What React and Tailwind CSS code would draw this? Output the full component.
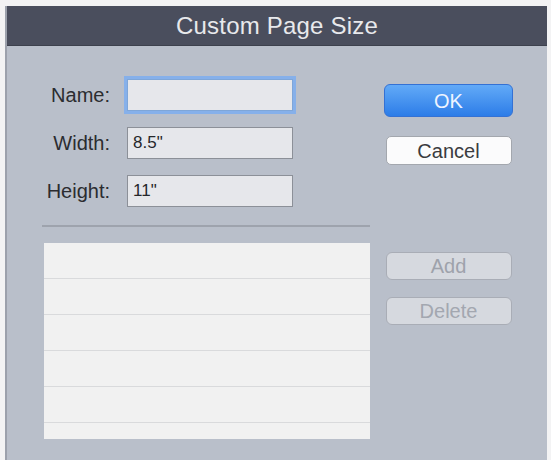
export default function App() {
  const font = { fontFamily: '"Liberation Sans", Arial, sans-serif' };
  const rows = [0, 1, 2, 3, 4, 5];
  return (
    <div className="w-[551px] h-[460px] bg-[#f3f3f4] pt-[6px] pl-[5px] pr-[4px] flex overflow-hidden" style={font}>
      <div className="flex-1 flex flex-col border-l-2 border-[#9ca1ac]">
        <div className="h-[40px] shrink-0 bg-[#4a4e5d] flex items-center justify-center border-b border-[#3d414d]">
          <span className="text-[24px] leading-none text-[#e8e9ec] tracking-[0.2px]">Custom Page Size</span>
        </div>
        <div className="flex-1 bg-[#b9bfca] flex">
          <div className="ml-[37px] w-[326px] pt-[33px] flex flex-col">
            <div className="flex flex-col gap-[16px]">
              <div className="flex items-center h-[32px]">
                <div className="w-[66px] text-right text-[20px] text-[#2b2c30]">Name:</div>
                <div className="ml-[17px] w-[166px] h-[32px] bg-[#e6e7eb] border border-[#7fa6d8] ring-[3px] ring-[#86b0ea]" />
              </div>
              <div className="flex items-center h-[32px]">
                <div className="w-[66px] text-right text-[20px] text-[#2b2c30]">Width:</div>
                <div className="ml-[17px] w-[166px] h-[32px] bg-[#e6e7eb] border border-[#8c9098] flex items-center pl-[5px] text-[17px] text-[#26272b]">8.5"</div>
              </div>
              <div className="flex items-center h-[32px]">
                <div className="w-[66px] text-right text-[20px] text-[#2b2c30]">Height:</div>
                <div className="ml-[17px] w-[166px] h-[32px] bg-[#e6e7eb] border border-[#8c9098] flex items-center pl-[5px] text-[17px] text-[#26272b]">11"</div>
              </div>
            </div>
            <div className="mt-[18px] -ml-[2px] w-[328px] h-[2px] bg-[#9ea3ad]" />
            <div className="mt-[16px] w-[326px] h-[196px] bg-[#f1f1f1] flex flex-col overflow-hidden">
              {rows.map((r) => (
                <div key={r} className="h-[36px] shrink-0 border-b border-[#d9dadc]" />
              ))}
            </div>
          </div>
          <div className="ml-[14px] w-[129px] pt-[38px] flex flex-col items-center">
            <div className="w-[129px] h-[33px] rounded-[6px] bg-gradient-to-b from-[#62aaf7] to-[#2c7ce8] border border-[#3471d4] flex items-center justify-center text-[20px] text-[#eef4ff]">OK</div>
            <div className="mt-[19px] w-[126px] h-[29px] rounded-[5px] bg-[#fbfbfc] border border-[#a3a7ae] flex items-center justify-center text-[20px] text-[#3a3b3f]">Cancel</div>
            <div className="mt-[87px] w-[126px] h-[28px] rounded-[6px] bg-[#d6d9df] border border-[#a9adb6] flex items-center justify-center text-[20px] text-[#9ea2ab]">Add</div>
            <div className="mt-[17px] w-[126px] h-[28px] rounded-[6px] bg-[#d6d9df] border border-[#a9adb6] flex items-center justify-center text-[20px] text-[#a3a7b0]">Delete</div>
          </div>
        </div>
      </div>
    </div>
  );
}
